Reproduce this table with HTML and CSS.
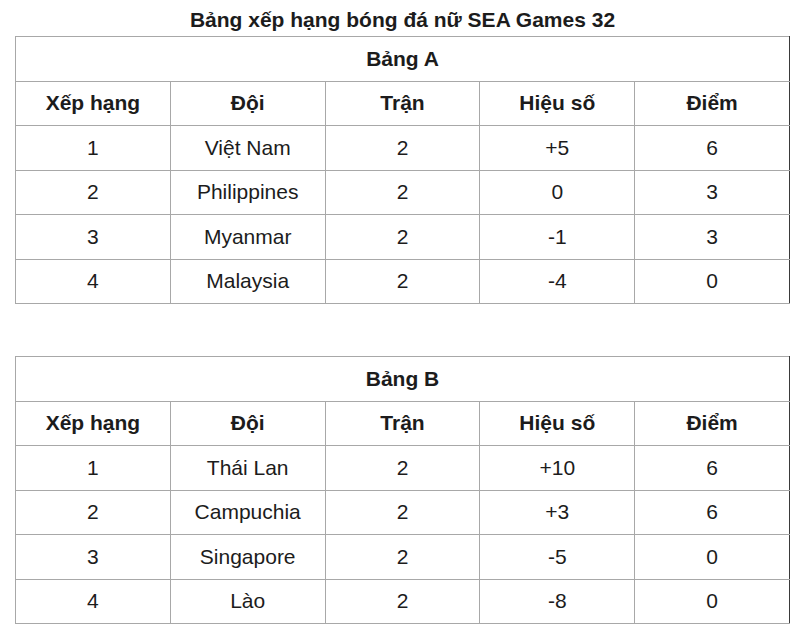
FILE: index.html
```html
<!DOCTYPE html>
<html lang="vi">
<head>
<meta charset="utf-8">
<title>Bảng xếp hạng bóng đá nữ SEA Games 32</title>
<link rel="stylesheet" href="styles.css">
</head>
<body>
<div class="page">
  <h1 class="title">Bảng xếp hạng bóng đá nữ SEA Games 32</h1>
  <table class="standings">
    <tr><th class="group" colspan="5">Bảng A</th></tr>
    <tr class="head"><th>Xếp hạng</th><th>Đội</th><th>Trận</th><th>Hiệu số</th><th>Điểm</th></tr>
    <tr><td>1</td><td>Việt Nam</td><td>2</td><td>+5</td><td>6</td></tr>
    <tr><td>2</td><td>Philippines</td><td>2</td><td>0</td><td>3</td></tr>
    <tr><td>3</td><td>Myanmar</td><td>2</td><td>-1</td><td>3</td></tr>
    <tr><td>4</td><td>Malaysia</td><td>2</td><td>-4</td><td>0</td></tr>
  </table>
  <table class="standings second">
    <tr><th class="group" colspan="5">Bảng B</th></tr>
    <tr class="head"><th>Xếp hạng</th><th>Đội</th><th>Trận</th><th>Hiệu số</th><th>Điểm</th></tr>
    <tr><td>1</td><td>Thái Lan</td><td>2</td><td>+10</td><td>6</td></tr>
    <tr><td>2</td><td>Campuchia</td><td>2</td><td>+3</td><td>6</td></tr>
    <tr><td>3</td><td>Singapore</td><td>2</td><td>-5</td><td>0</td></tr>
    <tr><td>4</td><td>Lào</td><td>2</td><td>-8</td><td>0</td></tr>
  </table>
</div>
</body>
</html>
```
FILE: styles.css
```css
html, body {
  margin: 0;
  padding: 0;
  background: #ffffff;
}
.page {
  padding: 0 10px 0 15px;
  font-family: "Liberation Sans", Arial, sans-serif;
  color: #1c1c1c;
  font-size: 21px;
}
.title {
  margin: 0;
  padding-top: 8px;
  height: 28px;
  line-height: 24px;
  font-size: 21px;
  font-weight: bold;
  text-align: center;
}
.standings {
  width: 775px;
  table-layout: fixed;
  border-collapse: collapse;
  border-top: 1px solid #a8a8a8;
  border-left: 1px solid #a8a8a8;
  border-bottom: 1px solid #a8a8a8;
  border-right: 1px solid #3a3a3a;
}
.standings.second {
  margin-top: 52px;
}
.standings th,
.standings td {
  height: 43.5px;
  padding: 0;
  text-align: center;
  vertical-align: middle;
  border: 1px solid #a8a8a8;
  font-size: 21px;
  line-height: 24px;
}
.standings th {
  font-weight: bold;
}
.standings td {
  font-weight: normal;
}
.standings tr > :last-child {
  border-right: 1px solid #3a3a3a;
}
```
